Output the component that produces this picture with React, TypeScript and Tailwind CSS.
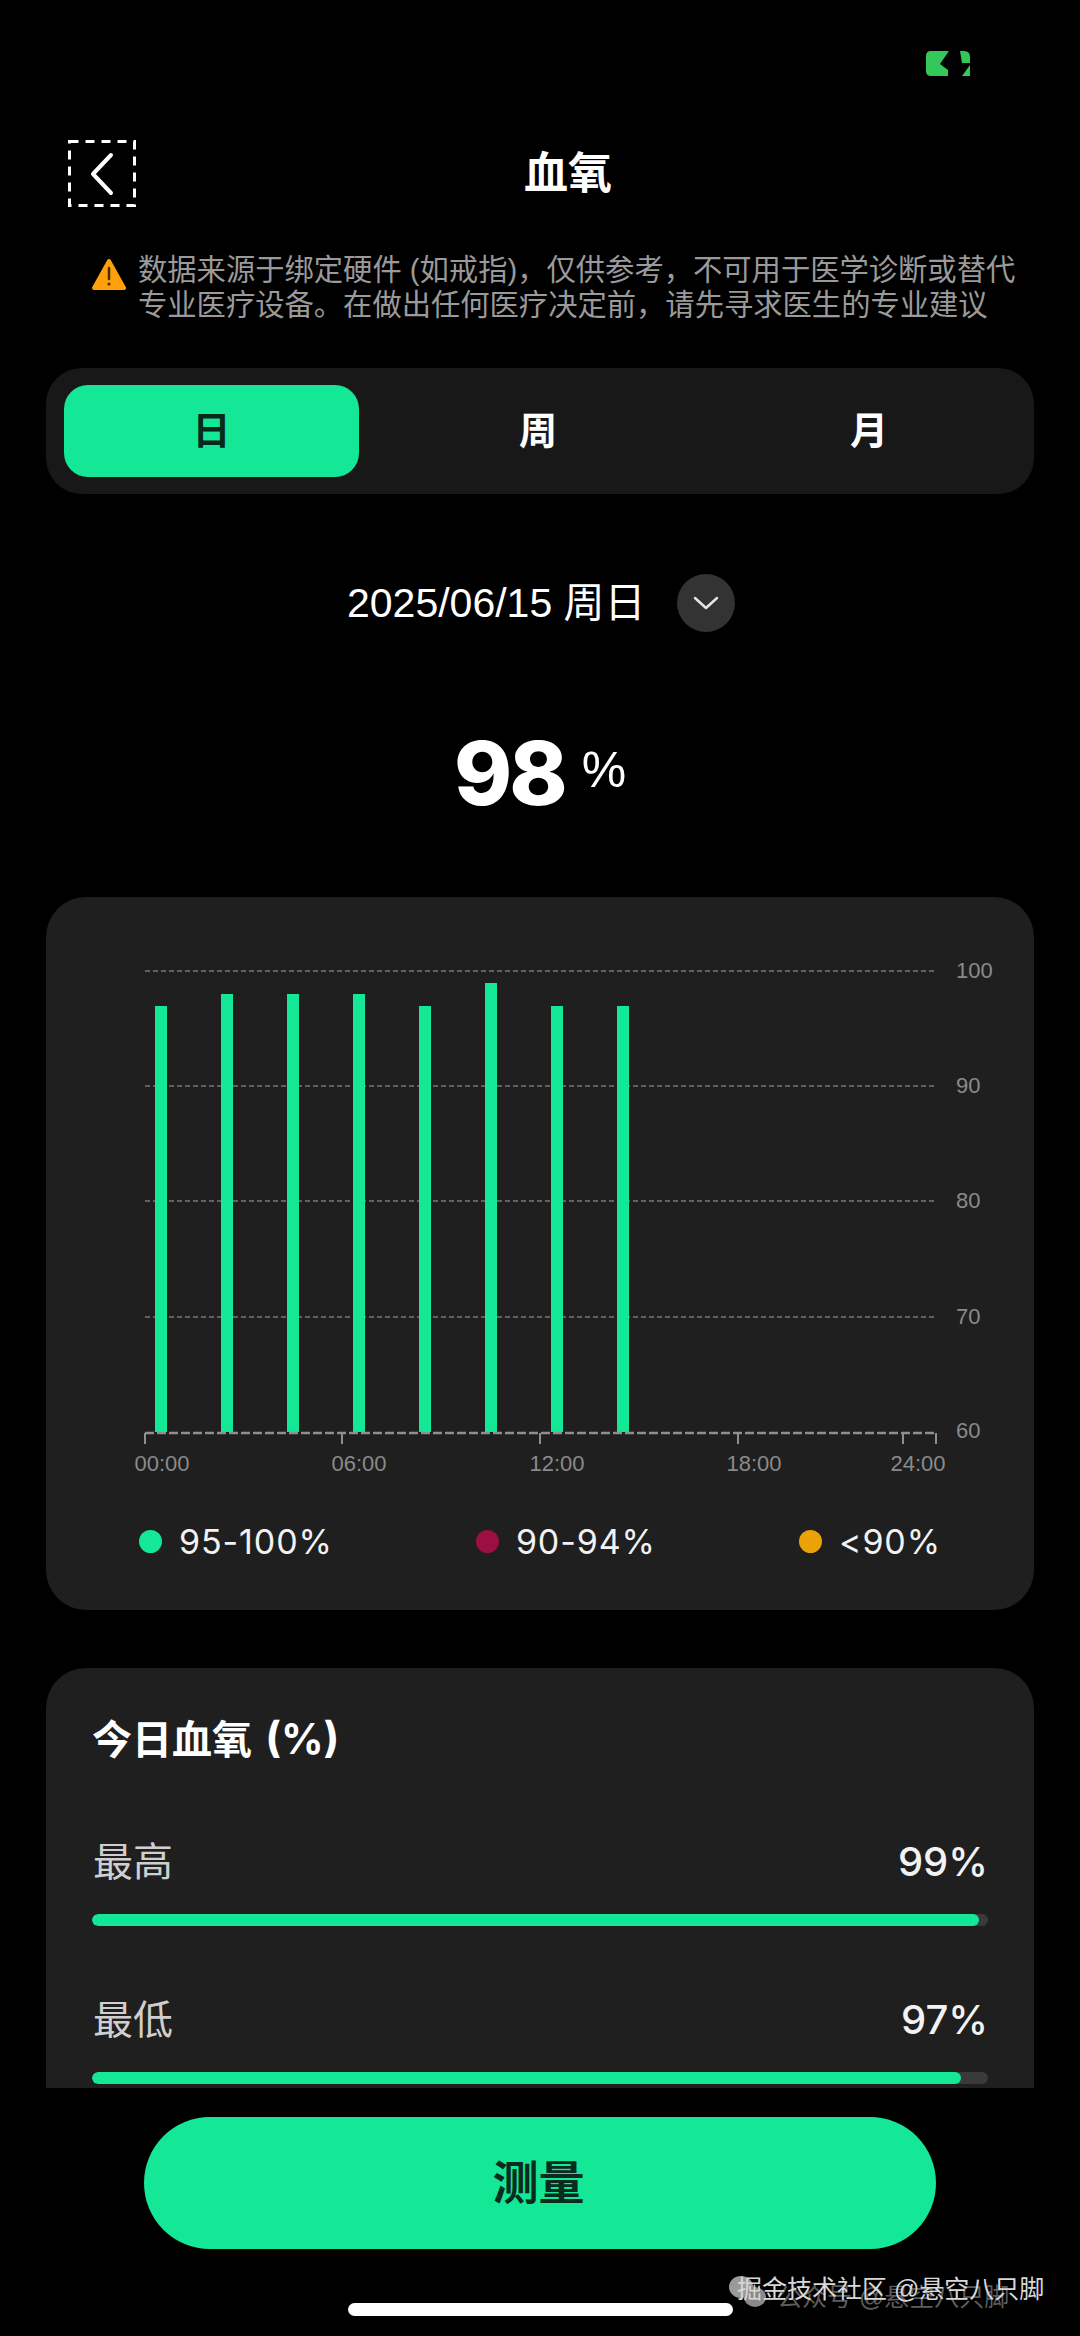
const CJK = '"Noto Sans CJK SC"';
const sans = `"Liberation Sans", ${CJK}, sans-serif`;
const inter = `Inter, ${CJK}, sans-serif`;

const bars = [
  { x: 161, top: 1006 },
  { x: 227, top: 994 },
  { x: 293, top: 994 },
  { x: 359, top: 994 },
  { x: 425, top: 1006 },
  { x: 491, top: 983 },
  { x: 557, top: 1006 },
  { x: 623, top: 1006 },
];

const gridLines = [
  { y: 971, label: '100' },
  { y: 1086, label: '90' },
  { y: 1201, label: '80' },
  { y: 1317, label: '70' },
];

const ticks = [145, 342, 540, 738, 903, 936];

const timeLabels = [
  { x: 162, label: '00:00' },
  { x: 359, label: '06:00' },
  { x: 557, label: '12:00' },
  { x: 754, label: '18:00' },
  { x: 918, label: '24:00' },
];

const legend = [
  { color: 'bg-[#14e795]', label: '95-100%' },
  { color: 'bg-[#9c0f42]', label: '90-94%' },
  { color: 'bg-[#eba206]', label: '<90%' },
];

function Battery() {
  return (
    <svg width="44" height="25" viewBox="0 0 44 25">
      <path d="M5 0H23L14 13L22 19V25H5Q0 25 0 20V5Q0 0 5 0Z" fill="#34c759" />
      <path d="M34 0H38Q44 0 44 6V12H36Z" fill="#34c759" />
      <path d="M44 14V25H36Z" fill="#34c759" />
    </svg>
  );
}

function BackButton() {
  return (
    <svg width="68" height="67" viewBox="0 0 68 67" className="shrink-0">
      <rect x="1.5" y="1.5" width="65" height="64" fill="none" stroke="#fff" strokeWidth="3" strokeDasharray="9 7" />
      <path d="M43 15L25 34L43 53" fill="none" stroke="#fff" strokeWidth="4" strokeLinecap="round" strokeLinejoin="round" />
    </svg>
  );
}

function WarningIcon() {
  return (
    <svg width="34" height="33" viewBox="0 0 34 33" className="shrink-0 mt-[6px]">
      <path d="M17 3L32 30H2Z" fill="#ff9f0a" stroke="#ff9f0a" strokeWidth="4" strokeLinejoin="round" />
      <path d="M17 10V21" stroke="#4a2c00" strokeWidth="2.5" strokeLinecap="round" />
      <circle cx="17" cy="26" r="1.6" fill="#4a2c00" />
    </svg>
  );
}

function Chart() {
  return (
    <svg width="988" height="530" viewBox="46 950 988 530" className="block">
      {gridLines.map((g) => (
        <g key={g.label}>
          <line x1="145" x2="936" y1={g.y} y2={g.y} stroke="#777" strokeWidth="1.5" strokeDasharray="5 3" />
          <text x="956" y={g.y + 7} fill="#8a8a8a" fontSize="22" fontFamily={sans}>{g.label}</text>
        </g>
      ))}
      {bars.map((b) => (
        <rect key={b.x} x={b.x - 6} y={b.top} width="12" height={1432 - b.top} fill="#14e795" />
      ))}
      <line x1="145" x2="936" y1="1433" y2="1433" stroke="#8f8f8f" strokeWidth="2.5" strokeDasharray="9 3" />
      {ticks.map((x) => (
        <line key={x} x1={x} x2={x} y1="1433" y2="1444" stroke="#8f8f8f" strokeWidth="2" />
      ))}
      <text x="956" y="1438" fill="#8a8a8a" fontSize="22" fontFamily={sans}>60</text>
      {timeLabels.map((t) => (
        <text key={t.label} x={t.x} y="1471" textAnchor="middle" fill="#8a8a8a" fontSize="22" fontFamily={sans}>{t.label}</text>
      ))}
    </svg>
  );
}

function StatRow({ label, value, fill }: { label: string; value: string; fill: string }) {
  return (
    <div>
      <div className="flex items-center justify-between h-[48px] pl-[1px]">
        <span className="text-[40px] text-[#cfcfcf]">{label}</span>
        <span className="text-[40px] font-medium text-[#f2f2f2]" style={{ fontFamily: inter }}>{value}</span>
      </div>
      <div className="mt-[28px] h-[12px] rounded-full bg-[#3a3a3a] overflow-hidden">
        <div className={`h-full rounded-full bg-[#14e795] ${fill}`} />
      </div>
    </div>
  );
}

export default function App() {
  return (
    <div className="relative h-[2336px] w-[1080px] overflow-hidden bg-black text-white" style={{ fontFamily: sans }}>
      <div className="h-[2088px] overflow-hidden">
        {/* Status bar */}
        <div className="flex justify-end pt-[51px] pr-[110px]">
          <Battery />
        </div>

        {/* Header */}
        <div className="mt-[64px] flex items-center pl-[68px] pr-[80px]">
          <BackButton />
          <h1 className="flex-1 text-center text-[44px] leading-[60px] font-bold">血氧</h1>
        </div>

        {/* Disclaimer */}
        <div className="mt-[45px] flex gap-[12px] pl-[92px] pr-[40px]">
          <WarningIcon />
          <p className="text-[29.3px] leading-[35px] text-[#9a9a9a] whitespace-nowrap">
            数据来源于绑定硬件 (如戒指)，仅供参考，不可用于医学诊断或替代
            <br />
            专业医疗设备。在做出任何医疗决定前，请先寻求医生的专业建议
          </p>
        </div>

        {/* Tabs */}
        <div className="mx-[46px] mt-[46px] flex h-[126px] items-center rounded-[36px] bg-[#181818] px-[18px] text-[38px] font-bold">
          <div className="flex h-[92px] w-[295px] items-center justify-center rounded-[24px] bg-[#14e795] text-[#07291c]">日</div>
          <div className="w-[358px] text-center">周</div>
          <div className="flex-1 pl-[5px] text-center">月</div>
        </div>

        {/* Date */}
        <div className="mt-[80px] flex h-[58px] items-center pl-[347px]">
          <span className="mt-[2px] text-[41px]">2025/06/15 周日</span>
          <div className="ml-[31px] flex h-[58px] w-[58px] items-center justify-center rounded-full bg-[#333333]">
            <svg width="26" height="16" viewBox="0 0 26 16">
              <path d="M2 3L13 13L24 3" fill="none" stroke="#e5e5e5" strokeWidth="2.5" strokeLinecap="round" strokeLinejoin="round" />
            </svg>
          </div>
        </div>

        {/* Current value */}
        <div className="mt-[97px] flex h-[88px] items-center pl-[454px]" style={{ fontFamily: inter }}>
          <span className="text-[88px] leading-[88px] font-extrabold tracking-[-3px]">98</span>
          <span className="ml-[17px] mt-[-6px] text-[50px] leading-[88px]" style={{ fontFamily: sans }}>%</span>
        </div>

        {/* Chart card */}
        <div className="mx-[46px] mt-[80px] h-[713px] rounded-[40px] bg-[#1f1f1f] pt-[53px]">
          <Chart />
          <div className="mt-[40px] flex h-[42px] items-center justify-between pl-[93px] pr-[93px]">
            {legend.map((l) => (
              <div key={l.label} className="flex items-center gap-[17px]">
                <span className={`h-[23px] w-[23px] rounded-full ${l.color}`} />
                <span className="text-[34px] tracking-[0.9px] text-[#f2f2f2]" style={{ fontFamily: inter }}>{l.label}</span>
              </div>
            ))}
          </div>
        </div>

        {/* Today card */}
        <div className="mx-[46px] mt-[58px] h-[700px] rounded-[40px] bg-[#1f1f1f] px-[46px] pt-[45px]">
          <h2 className="text-[40px] leading-[52px] font-bold">
            今日血氧 <span className="ml-[2px] text-[42px]" style={{ fontFamily: inter }}>(%)</span>
          </h2>
          <div className="mt-[72px] flex flex-col gap-[70px]">
            <StatRow label="最高" value="99%" fill="w-[99%]" />
            <StatRow label="最低" value="97%" fill="w-[97%]" />
          </div>
        </div>
      </div>

      {/* Measure button */}
      <div className="mx-[144px] mt-[29px] flex h-[132px] items-center justify-center rounded-full bg-[#14e795] pr-[3px] text-[46px] font-bold text-[#0a2c20]">
        测量
      </div>

      {/* Home indicator */}
      <div className="mx-auto mt-[54px] h-[13px] w-[385px] rounded-full bg-white" />

      {/* Watermark */}
      <div className="absolute left-[727px] top-[2274px] flex items-center">
        <svg width="40" height="36" viewBox="0 0 40 36" className="absolute left-0 top-0">
          <ellipse cx="14" cy="13" rx="12" ry="11" fill="#9a9a9a" />
          <ellipse cx="28" cy="23" rx="11" ry="10" fill="#8a8a8a" />
        </svg>
        <span className="absolute left-[50px] top-[8px] whitespace-nowrap text-[25px] leading-[30px] text-[#5c5c5c]">公众号 @悬空八只脚</span>
        <span className="relative ml-[10px] whitespace-nowrap text-[25px] leading-[30px] text-[#d8d8d8]">掘金技术社区 @悬空八只脚</span>
      </div>
    </div>
  );
}
